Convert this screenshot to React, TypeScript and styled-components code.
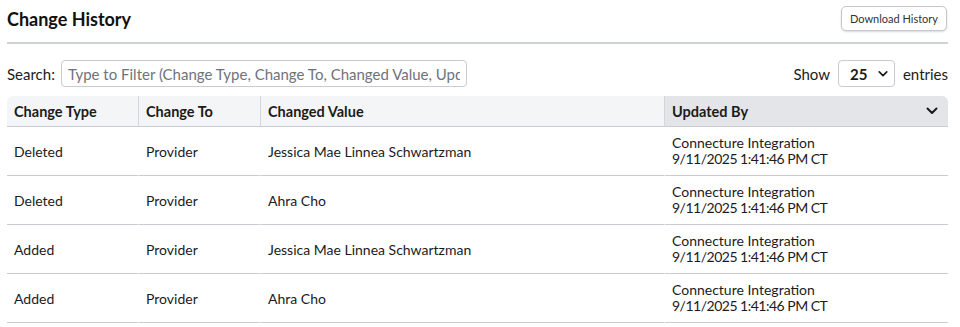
import React from 'react';
import styled, { createGlobalStyle } from 'styled-components';

const GlobalStyle = createGlobalStyle`
    html, body {
        margin: 0;
        padding: 0;
        background: #ffffff;
    }
    body {
        font-family: Lato, 'Noto Sans', sans-serif;
        color: #1b1b1b;
    }
`;

type HistoryRow = {
    changeType: string;
    changeTo: string;
    changedValue: string;
    updatedBy: string;
    updatedAt: string;
};

const ROWS: HistoryRow[] = [
    {
        changeType: 'Deleted',
        changeTo: 'Provider',
        changedValue: 'Jessica Mae Linnea Schwartzman',
        updatedBy: 'Connecture Integration',
        updatedAt: '9/11/2025 1:41:46 PM CT',
    },
    {
        changeType: 'Deleted',
        changeTo: 'Provider',
        changedValue: 'Ahra Cho',
        updatedBy: 'Connecture Integration',
        updatedAt: '9/11/2025 1:41:46 PM CT',
    },
    {
        changeType: 'Added',
        changeTo: 'Provider',
        changedValue: 'Jessica Mae Linnea Schwartzman',
        updatedBy: 'Connecture Integration',
        updatedAt: '9/11/2025 1:41:46 PM CT',
    },
    {
        changeType: 'Added',
        changeTo: 'Provider',
        changedValue: 'Ahra Cho',
        updatedBy: 'Connecture Integration',
        updatedAt: '9/11/2025 1:41:46 PM CT',
    },
];

const ChevronDown: React.FC = () => (
    <svg width="12" height="8" viewBox="0 0 12 8" fill="none">
        <path d="M1.5 1.5L6 6L10.5 1.5" stroke="#1b1b1b" strokeWidth="2" strokeLinecap="round" strokeLinejoin="round" />
    </svg>
);

const App: React.FC = () => {
    return (
        <>
            <GlobalStyle />
            <Page>
                <Header>
                    <Title>Change History</Title>
                    <DownloadButton type="button">Download History</DownloadButton>
                </Header>
                <Toolbar>
                    <SearchLabel>
                        Search:
                        <SearchInput placeholder="Type to Filter (Change Type, Change To, Changed Value, Updated By)" />
                    </SearchLabel>
                    <EntriesLabel>
                        Show
                        <SelectBox>
                            <span>25</span>
                            <ChevronDown />
                        </SelectBox>
                        entries
                    </EntriesLabel>
                </Toolbar>
                <Table>
                    <thead>
                        <tr>
                            <HeadCell style={{ width: 131 }}>Change Type</HeadCell>
                            <HeadCell style={{ width: 122 }}>Change To</HeadCell>
                            <HeadCell style={{ width: 404 }}>Changed Value</HeadCell>
                            <HeadCell $sorted>
                                <SortInner>
                                    Updated By
                                    <ChevronDown />
                                </SortInner>
                            </HeadCell>
                        </tr>
                    </thead>
                    <tbody>
                        {ROWS.map((row, i) => (
                            <tr key={i}>
                                <Cell>{row.changeType}</Cell>
                                <Cell>{row.changeTo}</Cell>
                                <Cell>{row.changedValue}</Cell>
                                <Cell>
                                    <Line>{row.updatedBy}</Line>
                                    <DateLine>{row.updatedAt}</DateLine>
                                </Cell>
                            </tr>
                        ))}
                    </tbody>
                </Table>
            </Page>
        </>
    );
};

const Page = styled.div`
    width: 941px;
    padding: 6px 0 0 7px;
`;

const Header = styled.div`
    display: flex;
    align-items: center;
    justify-content: space-between;
    padding-bottom: 11px;
    border-bottom: 2px solid #cfd2d6;
`;

const Title = styled.h2`
    margin: 0;
    font-size: 18px;
    font-weight: 700;
    color: #111;
`;

const DownloadButton = styled.button`
    height: 25px;
    padding: 0 8px;
    margin-right: 1px;
    font-family: inherit;
    font-size: 11px;
    color: #333;
    background: #fff;
    border: 1px solid #c4c7cc;
    border-radius: 5px;
    box-shadow: 0 1px 2px rgba(0, 0, 0, 0.15);
`;

const Toolbar = styled.div`
    display: flex;
    align-items: center;
    justify-content: space-between;
    margin-top: 16px;
    margin-bottom: 9px;
    font-size: 15px;
`;

const SearchLabel = styled.label`
    display: flex;
    align-items: center;
    gap: 6px;
`;

const SearchInput = styled.input`
    width: 406px;
    height: 27px;
    box-sizing: border-box;
    padding: 0 6px;
    font-family: inherit;
    font-size: 15px;
    border: 1px solid #c8cbd0;
    border-radius: 4px;
    &::placeholder {
        color: #6f737a;
    }
`;

const EntriesLabel = styled.div`
    display: flex;
    align-items: center;
    gap: 8px;
`;

const SelectBox = styled.div`
    display: flex;
    align-items: center;
    justify-content: space-between;
    width: 57px;
    height: 27px;
    box-sizing: border-box;
    padding: 0 6px 0 11px;
    border: 1px solid #c8cbd0;
    border-radius: 4px;
    font-weight: 700;
    font-size: 15px;
    svg {
        width: 10px;
    }
`;

const Table = styled.table`
    width: 941px;
    border-collapse: separate;
    border-spacing: 0;
    font-size: 14px;
`;

const HeadCell = styled.th<{ $sorted?: boolean }>`
    height: 31px;
    padding: 0 7px;
    box-sizing: border-box;
    text-align: left;
    font-size: 14.5px;
    font-weight: 700;
    background: ${(props) => (props.$sorted ? '#e3e5e8' : '#f4f5f7')};
    border-bottom: 1px solid #c9ccd1;
    &:not(:first-child) {
        border-left: 1px solid #d4d7db;
    }
    &:first-child {
        border-top-left-radius: 6px;
    }
    &:last-child {
        border-top-right-radius: 6px;
    }
`;

const SortInner = styled.div`
    display: flex;
    align-items: center;
    justify-content: space-between;
    padding-right: 3px;
`;

const Cell = styled.td`
    height: 49px;
    padding: 0 7px;
    box-sizing: border-box;
    border-bottom: 1px solid #c9ccd1;
    &:not(:first-child) {
        border-left: 1px solid transparent;
    }
`;

const Line = styled.div`
    line-height: 16px;
`;

const DateLine = styled(Line)`
    letter-spacing: -0.5px;
`;

export default App;
